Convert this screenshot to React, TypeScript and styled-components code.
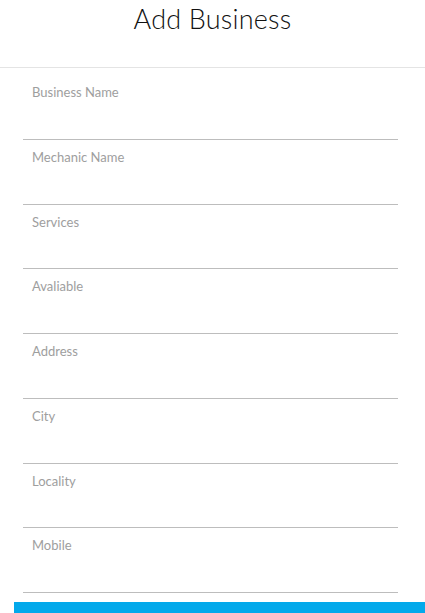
import React from "react";
import styled, { createGlobalStyle } from "styled-components";

const Global = createGlobalStyle`
  html, body { margin: 0; padding: 0; background: #ffffff; overflow: hidden; }
  body { font-family: Lato, "Noto Sans", "Open Sans", sans-serif; }
  * { box-sizing: border-box; }
`;

const Page = styled.div`
  display: flex;
  flex-direction: column;
  width: 425px;
  height: 100vh;
  overflow: hidden;
`;

const Header = styled.header`
  flex: none;
  height: 68px;
  border-bottom: 1px solid #e4e4e4;
  display: flex;
  justify-content: center;
`;

const Title = styled.h1`
  margin: 0;
  padding-top: 2px;
  font-size: 27px;
  font-weight: 300;
  color: #111111;
  letter-spacing: 0.2px;
`;

const Form = styled.form`
  flex: none;
  display: flex;
  flex-direction: column;
  padding: 7px 27px 0 23px;
`;

const Field = styled.label`
  display: block;
  height: 64.75px;
  border-bottom: 1px solid #bdbdbd;
  padding: 9px 0 0 9px;
`;

const LabelText = styled.span`
  display: block;
  font-size: 13px;
  color: #9e9e9e;
  line-height: 16px;
`;

const Submit = styled.button`
  flex: none;
  margin: 9px 0 0 14px;
  height: 44px;
  width: 411px;
  border: none;
  background: #03a9eb;
  color: #fff;
  font-family: inherit;
`;

const fields = [
  "Business Name",
  "Mechanic Name",
  "Services",
  "Avaliable",
  "Address",
  "City",
  "Locality",
  "Mobile",
];

export default function App() {
  return (
    <Page>
      <Global />
      <Header>
        <Title>Add Business</Title>
      </Header>
      <Form>
        {fields.map((f) => (
          <Field key={f}>
            <LabelText>{f}</LabelText>
          </Field>
        ))}
      </Form>
      <Submit type="button" aria-label="Submit" />
    </Page>
  );
}
